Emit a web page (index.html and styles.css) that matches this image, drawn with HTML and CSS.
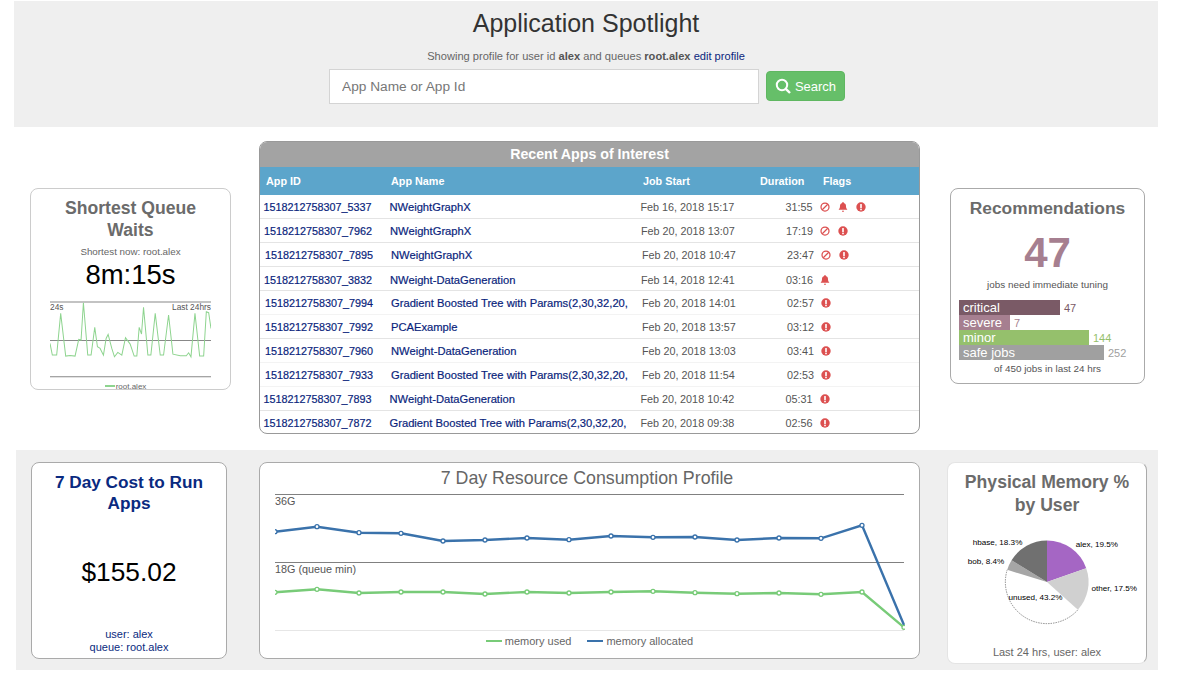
FILE: index.html
```html
<!DOCTYPE html>
<html lang="en">
<head>
  <meta charset="UTF-8" />
  <title>Application Spotlight</title>
  <link rel="stylesheet" href="styles.css">
</head>
<body>
  <svg class="icon-defs">
    <symbol id="i-ban" viewBox="0 0 16 16">
      <circle cx="8" cy="8" r="6.4" fill="none" stroke="currentColor" stroke-width="2"/>
      <path d="M3.600 12.400 12.400 3.600" stroke="currentColor" stroke-width="2"/>
    </symbol>
    <symbol id="i-bell" viewBox="1.500 1 13 15">
      <path fill="currentColor" d="M8 1a1.200 1.200 0 0 1 1.200 1.200v.4c2.200.5 3.300 2.300 3.300 4.400 0 3 .8 4 1.800 5v.8H1.700V12c1-1 1.800-2 1.800-5 0-2.100 1.100-3.900 3.300-4.400v-.4A1.200 1.200 0 0 1 8 1zM6.300 14.300h3.400a1.700 1.700 0 0 1-3.400 0z"/>
    </symbol>
    <symbol id="i-warn" viewBox="0 0 16 16">
      <circle cx="8" cy="8" r="7.500" fill="currentColor"/>
      <rect x="6.700" y="3" width="2.600" height="6.800" rx=".6" fill="#fff"/>
      <rect x="6.700" y="10.800" width="2.600" height="2.400" rx=".5" fill="#fff"/>
    </symbol>
  </svg>

  <header class="spotlight">
    <h1>Application Spotlight</h1>
    <p class="profile">Showing profile for user id <b>alex</b> and queues <b>root.alex</b> <a href="#">edit profile</a></p>
    <form class="search">
      <input type="text" placeholder="App Name or App Id">
      <button type="button">
        <svg class="search-icon" viewBox="0 0 16 16"><circle cx="7" cy="7" r="5.200" fill="none" stroke="#fff" stroke-width="2"/><path d="M10.800 10.800 15 15" stroke="#fff" stroke-width="2.400"/></svg>
        Search
      </button>
    </form>
  </header>

  <section class="row-middle">
    <div class="card queue-card">
      <h2>Shortest Queue Waits</h2>
      <p class="queue-now">Shortest now: root.alex</p>
      <div class="queue-time">8m:15s</div>
      <svg class="spark" viewBox="90 360 482 235">
        <path class="spark-grid" d="M90 366H572M90 481H572M90 590H572"/>
        <polyline class="spark-line" points="90,490 97,525 110,525 122,400 137,528 150,526 165,528 176,478 183,480 190,368 203,525 213,525 224,442 232,500 240,505 250,525 258,475 264,463 275,505 283,530 293,517 305,525 316,473 330,492 342,528 350,528 357,442 364,462 370,382 383,525 392,525 405,400 420,525 430,525 445,405 458,522 480,527 498,527 505,518 512,530 524,400 538,528 550,528 558,395 565,398 572,445"/>
        <text class="spark-label" x="90" y="391">24s</text>
        <text class="spark-label" x="572" y="391" text-anchor="end">Last 24hrs</text>
      </svg>
      <div class="spark-legend"><span class="spark-key"></span>root.alex</div>
    </div>

    <div class="apps">
      <div class="apps-title">Recent Apps of Interest</div>
      <div class="apps-head">
        <span>App ID</span><span>App Name</span><span>Job Start</span><span>Duration</span><span>Flags</span>
      </div>
      <div class="app-row">
        <a href="#">1518212758307_5337</a><a href="#">NWeightGraphX</a><span>Feb 16, 2018 15:17</span><span class="dur">31:55</span>
        <span class="flags"><svg><use href="#i-ban"/></svg><svg><use href="#i-bell"/></svg><svg><use href="#i-warn"/></svg></span>
      </div>
      <div class="app-row shift-1">
        <a href="#">1518212758307_7962</a><a href="#">NWeightGraphX</a><span>Feb 20, 2018 13:07</span><span class="dur">17:19</span>
        <span class="flags"><svg><use href="#i-ban"/></svg><svg><use href="#i-warn"/></svg></span>
      </div>
      <div class="app-row shift-2">
        <a href="#">1518212758307_7895</a><a href="#">NWeightGraphX</a><span>Feb 20, 2018 10:47</span><span class="dur">23:47</span>
        <span class="flags"><svg><use href="#i-ban"/></svg><svg><use href="#i-warn"/></svg></span>
      </div>
      <div class="app-row shift-1 low">
        <a href="#">1518212758307_3832</a><a href="#">NWeight-DataGeneration</a><span>Feb 14, 2018 12:41</span><span class="dur">03:16</span>
        <span class="flags"><svg><use href="#i-bell"/></svg></span>
      </div>
      <div class="app-row shift-2 faint">
        <a href="#">1518212758307_7994</a><a href="#">Gradient Boosted Tree with Params(2,30,32,20,</a><span>Feb 20, 2018 14:01</span><span class="dur">02:57</span>
        <span class="flags"><svg><use href="#i-warn"/></svg></span>
      </div>
      <div class="app-row shift-2">
        <a href="#">1518212758307_7992</a><a href="#">PCAExample</a><span>Feb 20, 2018 13:57</span><span class="dur">03:12</span>
        <span class="flags"><svg><use href="#i-warn"/></svg></span>
      </div>
      <div class="app-row shift-2 faint">
        <a href="#">1518212758307_7960</a><a href="#">NWeight-DataGeneration</a><span>Feb 20, 2018 13:03</span><span class="dur">03:41</span>
        <span class="flags"><svg><use href="#i-warn"/></svg></span>
      </div>
      <div class="app-row shift-2 faint">
        <a href="#">1518212758307_7933</a><a href="#">Gradient Boosted Tree with Params(2,30,32,20,</a><span>Feb 20, 2018 11:54</span><span class="dur">02:53</span>
        <span class="flags"><svg><use href="#i-warn"/></svg></span>
      </div>
      <div class="app-row">
        <a href="#">1518212758307_7893</a><a href="#">NWeight-DataGeneration</a><span>Feb 20, 2018 10:42</span><span class="dur">05:31</span>
        <span class="flags"><svg><use href="#i-warn"/></svg></span>
      </div>
      <div class="app-row">
        <a href="#">1518212758307_7872</a><a href="#">Gradient Boosted Tree with Params(2,30,32,20,</a><span>Feb 20, 2018 09:38</span><span class="dur">02:56</span>
        <span class="flags"><svg><use href="#i-warn"/></svg></span>
      </div>
    </div>

    <div class="card rec-card">
      <h2>Recommendations</h2>
      <div class="rec-count">47</div>
      <p class="rec-note">jobs need immediate tuning</p>
      <div class="bars">
        <div class="bar-row critical"><div class="bar" style="width: 101px">critical</div><span>47</span></div>
        <div class="bar-row severe"><div class="bar" style="width: 51px">severe</div><span>7</span></div>
        <div class="bar-row minor"><div class="bar" style="width: 130px">minor</div><span>144</span></div>
        <div class="bar-row safe"><div class="bar" style="width: 145px">safe jobs</div><span>252</span></div>
      </div>
      <p class="rec-foot">of 450 jobs in last 24 hrs</p>
    </div>
  </section>

  <section class="row-bottom">
    <div class="card cost-card">
      <h2>7 Day Cost to Run Apps</h2>
      <div class="cost">$155.02</div>
      <p class="cost-foot">user: alex<br>queue: root.alex</p>
    </div>

    <div class="card chart-card">
      <h3>7 Day Resource Consumption Profile</h3>
      <svg class="chart" viewBox="0 0 630 143">
        <path class="chart-grid" d="M0 .5H629M0 68.500H629"/>
        <path class="chart-base" d="M0 136.500H629"/>
        <text class="chart-label" x="0" y="11">36G</text>
        <text class="chart-label" x="0" y="79">18G (queue min)</text>
        <polyline class="series used" points="0,98.300 42,95.300 84,99 126,98 168,98 210,100 252,98 294,99 336,98 378,97.300 420,98.700 462,99.700 504,99 546,100.300 587,98 629,133.300"/>
        <polyline class="series alloc" points="0,37.700 42,32.700 84,38.700 126,39.300 168,47 210,46 252,44 294,45.700 336,42 378,43.300 420,43 462,46 504,44 546,44.300 587,31.300 629,131"/>
        <g class="dots used">
          <circle cx="0" cy="98.300" r="2"/><circle cx="42" cy="95.300" r="2"/><circle cx="84" cy="99" r="2"/><circle cx="126" cy="98" r="2"/><circle cx="168" cy="98" r="2"/><circle cx="210" cy="100" r="2"/><circle cx="252" cy="98" r="2"/><circle cx="294" cy="99" r="2"/><circle cx="336" cy="98" r="2"/><circle cx="378" cy="97.300" r="2"/><circle cx="420" cy="98.700" r="2"/><circle cx="462" cy="99.700" r="2"/><circle cx="504" cy="99" r="2"/><circle cx="546" cy="100.300" r="2"/><circle cx="587" cy="98" r="2"/><circle cx="629" cy="133.300" r="2"/>
        </g>
        <g class="dots alloc">
          <circle cx="0" cy="37.700" r="2"/><circle cx="42" cy="32.700" r="2"/><circle cx="84" cy="38.700" r="2"/><circle cx="126" cy="39.300" r="2"/><circle cx="168" cy="47" r="2"/><circle cx="210" cy="46" r="2"/><circle cx="252" cy="44" r="2"/><circle cx="294" cy="45.700" r="2"/><circle cx="336" cy="42" r="2"/><circle cx="378" cy="43.300" r="2"/><circle cx="420" cy="43" r="2"/><circle cx="462" cy="46" r="2"/><circle cx="504" cy="44" r="2"/><circle cx="546" cy="44.300" r="2"/><circle cx="587" cy="31.300" r="2"/>
        </g>
      </svg>
      <div class="chart-legend">
        <span class="legend-item"><i class="key key-used"></i>memory used</span>
        <span class="legend-item"><i class="key key-alloc"></i>memory allocated</span>
      </div>
    </div>

    <div class="card pie-card">
      <h2>Physical Memory % by User</h2>
      <svg class="pie" viewBox="0 0 200 104">
        <g transform="translate(100 52)">
          <path fill="#a566c4" d="M0 0V-42A42 42 0 0 1 39.600-14Z"/>
          <path fill="#d0d0d0" d="M0 0 39.600-14A42 42 0 0 1 31.200 28.100Z"/>
          <path class="pie-unused" d="M31.200 28.100A42 42 0 0 1-40.200-12.300"/>
          <path fill="#a6a6a6" d="M0 0-40.200-12.300A42 42 0 0 1-35.800-21.900Z"/>
          <path fill="#707070" d="M0 0-35.800-21.900A42 42 0 0 1 0-42Z"/>
        </g>
        <text class="pie-label" x="25" y="15">hbase, 18.3%</text>
        <text class="pie-label" x="129" y="17">alex, 19.5%</text>
        <text class="pie-label" x="20" y="34">bob, 8.4%</text>
        <text class="pie-label" x="145" y="61">other, 17.5%</text>
        <text class="pie-label" x="61" y="70">unused, 43.2%</text>
      </svg>
      <p class="pie-foot">Last 24 hrs, user: alex</p>
    </div>
  </section>
</body>
</html>
```

FILE: styles.css
```css
body {
  margin: 0;
  padding: 1px 42px 0 14px;
  font-family: "Liberation Sans", Arial, sans-serif;
  background: #fff;
  color: #555;
  overflow: hidden;
}

h1, h2, h3, p {
  margin: 0;
}

a {
  color: #0a1f7c;
  text-decoration: none;
}

.icon-defs {
  display: none;
}

/* top band */
.spotlight {
  height: 126px;
  background: #efefef;
  display: flex;
  flex-direction: column;
  align-items: center;
}

.spotlight h1 {
  margin-top: 8px;
  font-size: 25px;
  line-height: 28px;
  font-weight: normal;
  color: #333;
}

.profile {
  margin-top: 12px;
  font-size: 11.1px;
  line-height: 14px;
  color: #666;
}

.profile b {
  color: #555;
}

.search {
  margin-top: 6px;
  padding-left: 2px;
  display: flex;
  align-items: flex-start;
  gap: 7px;
}

.search input {
  box-sizing: border-box;
  width: 430px;
  height: 35px;
  padding: 0 12px;
  border: 1px solid #d4d4d4;
  background: #fff;
  font-family: inherit;
  font-size: 13.7px;
}

.search input::placeholder {
  color: #777;
}

.search button {
  box-sizing: border-box;
  width: 79px;
  height: 30px;
  margin-top: 2px;
  padding: 0;
  border: 1px solid #5fb761;
  border-radius: 4px;
  background: #66bf69;
  color: #fff;
  font-family: inherit;
  font-size: 13px;
  display: flex;
  align-items: center;
  justify-content: center;
  gap: 4px;
}

.search-icon {
  width: 16px;
  height: 16px;
}

/* cards */
.card {
  box-sizing: border-box;
  background: #fff;
  border: 1px solid #aaa;
  border-radius: 8px;
  text-align: center;
}

.card h2 {
  font-size: 17.6px;
  line-height: 22px;
  color: #6b6b6b;
}

.row-middle {
  height: 293px;
  margin: 14px 0 16px;
  padding-left: 16px;
  display: flex;
  align-items: flex-start;
}

/* queue wait card */
.queue-card {
  width: 201px;
  height: 202px;
  margin-top: 47px;
  padding: 8px 19px 0;
  border-color: #ccc;
  overflow: hidden;
}

.queue-now {
  margin-top: 5px;
  font-size: 9.8px;
  line-height: 12px;
  color: #666;
}

.queue-time {
  font-size: 27.5px;
  line-height: 32px;
  margin-top: 1px;
  color: #000;
}

.spark {
  display: block;
  width: 161px;
  height: 78.500px;
  margin-top: 9px;
}

.spark-grid {
  fill: none;
  stroke: #888;
  stroke-width: 3;
}

.spark-line {
  fill: none;
  stroke: #8ed48f;
  stroke-width: 3;
}

.spark-label {
  font-size: 25px;
  fill: #555;
}

.spark-legend {
  margin-top: 3px;
  padding-right: 10px;
  font-size: 8px;
  line-height: 10px;
  color: #666;
}

.spark-key {
  display: inline-block;
  width: 10px;
  height: 2px;
  margin-right: 1px;
  background: #8ed48f;
  vertical-align: middle;
}

/* recent apps table */
.apps {
  box-sizing: border-box;
  width: 661px;
  height: 293px;
  margin: 0 30px 0 28px;
  border: 1px solid #999;
  border-radius: 8px;
  overflow: hidden;
  font-size: 10.8px;
}

.apps-title {
  height: 25px;
  line-height: 24px;
  background: #a3a3a3;
  color: #fff;
  font-size: 14.2px;
  font-weight: bold;
  text-align: center;
}

.apps-head {
  height: 28px;
  line-height: 28px;
  background: #5ca5cb;
  color: #fff;
  font-weight: bold;
  display: grid;
  grid-template-columns: 125px 252px 117px 63px 1fr;
  padding-left: 6px;
}

.app-row {
  box-sizing: border-box;
  height: 24px;
  padding-left: 3.500px;
  border-bottom: 1px solid #e4e4e4;
  display: grid;
  grid-template-columns: 126px 251px 121px 51px 1fr;
  align-items: center;
  color: #555;
}

.app-row a {
  -webkit-text-stroke: .2px #0a1f7c;
}

.app-row a + a {
  font-size: 11.2px;
}

.app-row:last-child {
  border-bottom: 0;
}

.shift-1 {
  padding-left: 4px;
}

.shift-2 {
  padding-left: 5px;
}

.low {
  padding-top: 3px;
}

.faint {
  border-bottom-color: #f3f3f3;
}

.dur {
  text-align: right;
}

.flags {
  padding-left: 7px;
  display: flex;
  align-items: center;
  gap: 8px;
  color: #dc5050;
}

.flags svg {
  width: 10px;
  height: 10px;
}

/* recommendations */
.rec-card {
  width: 195px;
  height: 196px;
  margin-top: 47px;
  padding: 8px 8px 0;
  border-color: #aaa;
}

.card.rec-card h2 {
  font-size: 17.4px;
}

.rec-count {
  margin-top: 9px;
  font-size: 42px;
  line-height: 50px;
  font-weight: bold;
  color: #a67f90;
}

.rec-note {
  margin-top: 1px;
  font-size: 9.9px;
  line-height: 12px;
}

.bars {
  margin-top: 9px;
  text-align: left;
  font-size: 13px;
}

.bar-row {
  height: 15px;
  display: flex;
  align-items: center;
  gap: 4px;
  font-size: 11px;
}

.bar {
  height: 15px;
  line-height: 15px;
  padding-left: 4px;
  box-sizing: border-box;
  color: #fff;
  font-size: 13px;
}

.critical .bar { background: #7a5a66; }
.critical span { color: #7a5a66; }
.severe .bar { background: #a67f90; }
.severe span { color: #a67f90; }
.minor .bar { background: #95c06c; }
.minor span { color: #95c06c; }
.safe .bar { background: #a0a0a0; }
.safe span { color: #a0a0a0; }

.rec-foot {
  margin-top: 3px;
  font-size: 9.9px;
  line-height: 12px;
}

/* bottom band */
.row-bottom {
  height: 220px;
  margin-left: 2px;
  padding: 12px 0 0 15px;
  box-sizing: border-box;
  background: #efefef;
  display: flex;
  align-items: flex-start;
}

.cost-card {
  width: 196px;
  height: 197px;
  padding: 9px 8px 4px;
  display: flex;
  flex-direction: column;
  justify-content: space-between;
}

.card.cost-card h2 {
  font-size: 17.2px;
  line-height: 21px;
  color: #0a2a80;
}

.cost {
  margin-top: 2px;
  font-size: 26.300px;
  color: #000;
}

.cost-foot {
  font-size: 11px;
  line-height: 13px;
  color: #0a2a80;
}

.chart-card {
  width: 661px;
  height: 197px;
  margin: 0 27px 0 32px;
  padding: 5px 15px 0;
}

.chart-card h3 {
  padding-right: 5px;
  font-size: 17.8px;
  line-height: 20px;
  font-weight: normal;
  color: #666;
}

.chart {
  display: block;
  width: 630px;
  height: 143px;
  margin-top: 6px;
}

.chart-grid {
  fill: none;
  stroke: #808080;
  stroke-width: 1;
}

.chart-base {
  fill: none;
  stroke: #e6e6e6;
  stroke-width: 1;
}

.chart-label {
  font-size: 10.800px;
  fill: #555;
}

.series {
  fill: none;
  stroke-width: 2.400;
}

.series.used { stroke: #78cb78; }
.series.alloc { stroke: #3a72ab; }

.dots circle {
  fill: #fff;
  stroke-width: 1.300;
}

.dots.used circle { stroke: #78cb78; }
.dots.alloc circle { stroke: #3a72ab; }

.chart-legend {
  margin-top: -3px;
  display: flex;
  justify-content: center;
  gap: 16px;
  font-size: 11px;
  line-height: 14px;
  color: #666;
}

.legend-item {
  display: flex;
  align-items: center;
  gap: 3px;
}

.key {
  width: 16px;
  height: 2px;
}

.key-used { background: #78cb78; }
.key-alloc { background: #3a72ab; }

.pie-card {
  width: 200px;
  height: 202px;
  padding-top: 8px;
  border-color: #e4e4e4 #aaa #e4e4e4 #e4e4e4;
}

.pie-card h2 {
  padding: 0 10px;
  line-height: 23px;
}

.pie {
  display: block;
  width: 198px;
  height: 104px;
  margin-top: 13px;
}

.pie-unused {
  fill: #fff;
  stroke: #444;
  stroke-width: .6;
  stroke-dasharray: 1.500 1;
}

.pie-label {
  font-size: 8.200px;
  fill: #000;
}

.pie-foot {
  margin-top: 11px;
  font-size: 11px;
  line-height: 14px;
  color: #666;
}
```
